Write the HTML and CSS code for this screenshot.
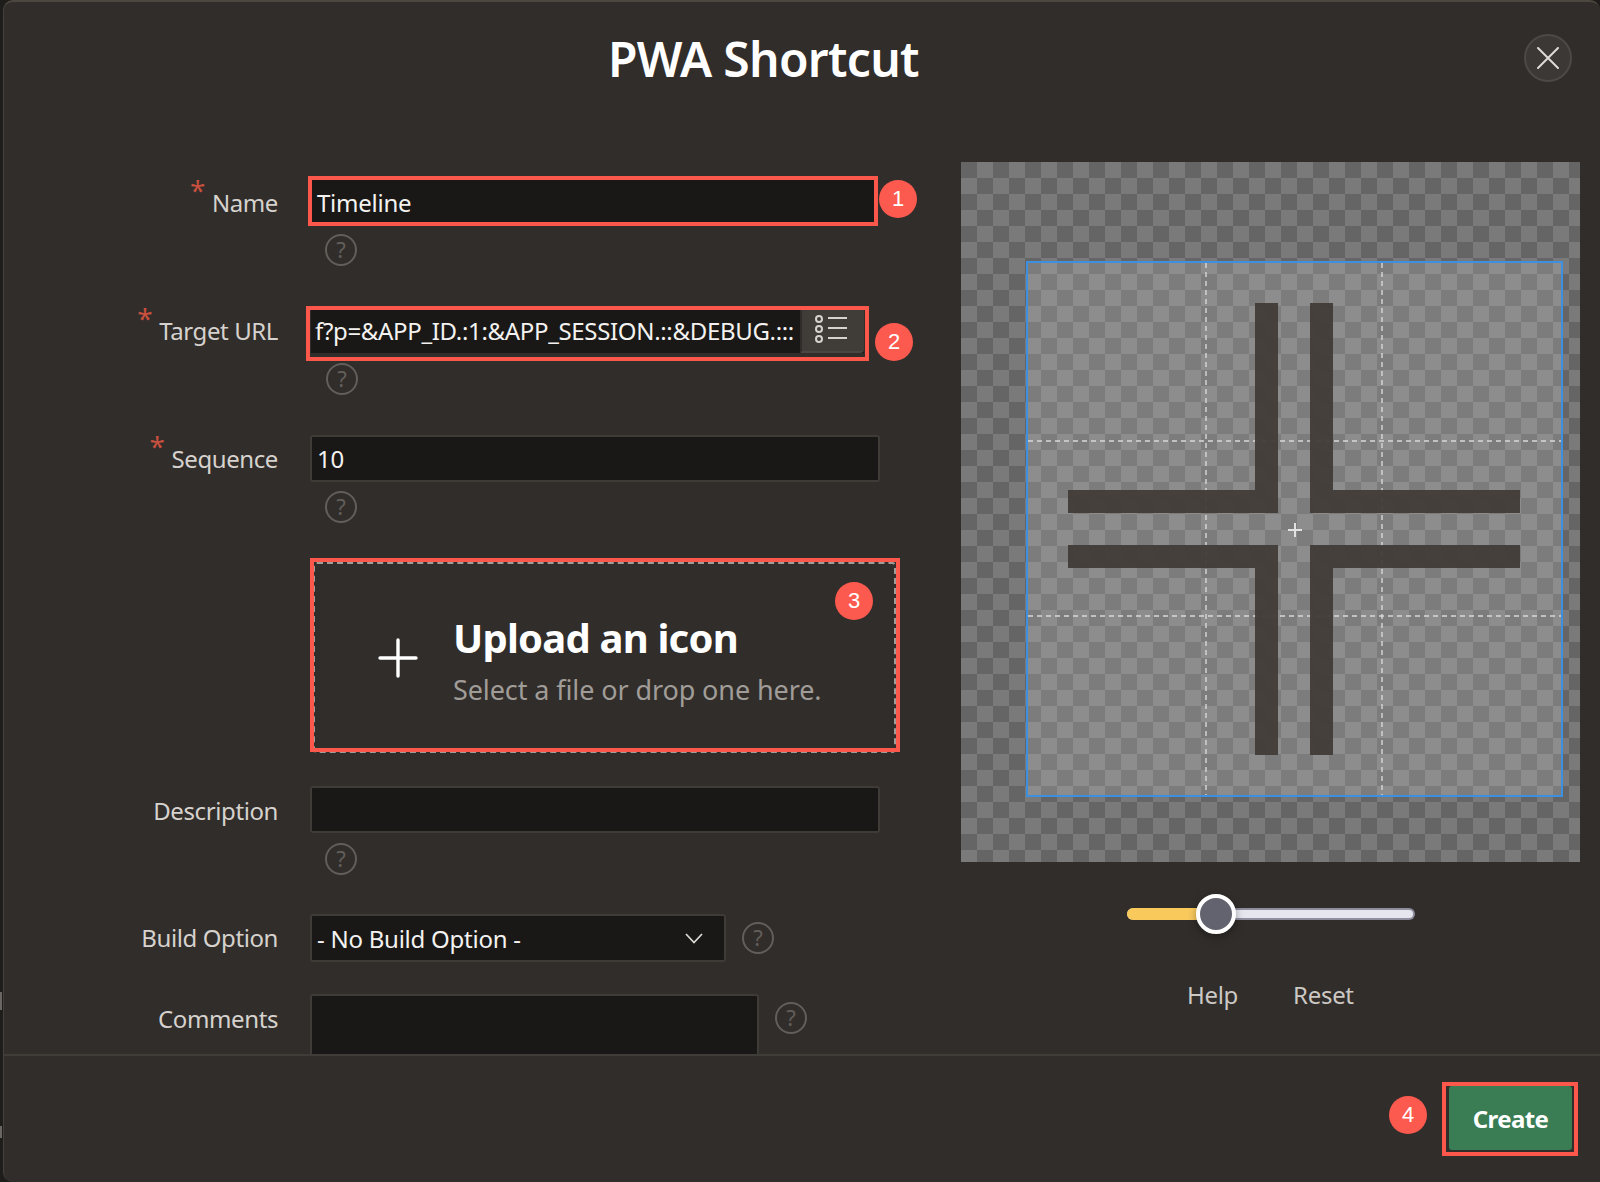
FILE: index.html
```html
<!DOCTYPE html>
<html lang="en">
<head>
<meta charset="utf-8">
<title>PWA Shortcut</title>
<link rel="stylesheet" href="styles.css">
</head>
<body>
<div class="dialog">
  <header class="head">
    <h1 class="title">PWA Shortcut</h1>
    <button class="close" aria-label="Close">
      <svg width="22" height="22" viewBox="0 0 22 22"><path d="M1 1L21 21M21 1L1 21" fill="none" stroke="#dedad6" stroke-width="2" stroke-linecap="round"/></svg>
    </button>
  </header>
  <main class="body">
    <section class="form">
      <div class="row row-name">
        <label class="label req">Name</label>
        <div class="field">
          <div class="input marked"><span class="val">Timeline</span></div>
          <span class="badge badge-1">1</span>
          <svg class="help below" viewBox="0 0 32 32"><circle cx="16" cy="16" r="15"/><text x="16" y="23.500" text-anchor="middle">?</text></svg>
        </div>
      </div>
      <div class="row row-url">
        <label class="label req">Target URL</label>
        <div class="field">
          <div class="input url">
            <span class="val">f?p=&amp;APP_ID.:1:&amp;APP_SESSION.::&amp;DEBUG.:::</span>
            <span class="lov">
              <svg width="32" height="28" viewBox="0 0 32 28"><g fill="none" stroke="#d6d2ce" stroke-width="2"><circle cx="4" cy="4" r="3"/><circle cx="4" cy="14" r="3"/><circle cx="4" cy="24" r="3"/><path d="M13 3H32M13 13H32M13 23H32"/></g></svg>
            </span>
          </div>
          <span class="ring ring-url"></span>
          <span class="badge badge-2">2</span>
          <svg class="help below" viewBox="0 0 32 32"><circle cx="16" cy="16" r="15"/><text x="16" y="23.500" text-anchor="middle">?</text></svg>
        </div>
      </div>
      <div class="row row-seq">
        <label class="label req">Sequence</label>
        <div class="field">
          <div class="input"><span class="val">10</span></div>
          <svg class="help below" viewBox="0 0 32 32"><circle cx="16" cy="16" r="15"/><text x="16" y="23.500" text-anchor="middle">?</text></svg>
        </div>
      </div>
      <div class="upload">
        <svg class="plus" width="40" height="40" viewBox="0 0 40 40"><path d="M2 20H38M20 2V38" fill="none" stroke="#fff" stroke-width="3.400" stroke-linecap="round"/></svg>
        <div class="upload-text">
          <div class="upload-title">Upload an icon</div>
          <div class="upload-sub">Select a file or drop one here.</div>
        </div>
        <span class="ring ring-upload"></span>
        <span class="badge badge-3">3</span>
      </div>
      <div class="row row-desc">
        <label class="label">Description</label>
        <div class="field">
          <div class="input"></div>
          <svg class="help below" viewBox="0 0 32 32"><circle cx="16" cy="16" r="15"/><text x="16" y="23.500" text-anchor="middle">?</text></svg>
        </div>
      </div>
      <div class="row row-build">
        <label class="label">Build Option</label>
        <div class="field inline">
          <div class="input select">
            <span class="val">- No Build Option -</span>
            <svg width="18" height="11" viewBox="0 0 18 11"><path d="M1 1L9 9.500L17 1" fill="none" stroke="#dedad6" stroke-width="1.700"/></svg>
          </div>
          <svg class="help" viewBox="0 0 32 32"><circle cx="16" cy="16" r="15"/><text x="16" y="23.500" text-anchor="middle">?</text></svg>
        </div>
      </div>
      <div class="row row-comments">
        <label class="label">Comments</label>
        <div class="field inline">
          <div class="input textarea"></div>
          <svg class="help" viewBox="0 0 32 32"><circle cx="16" cy="16" r="15"/><text x="16" y="23.500" text-anchor="middle">?</text></svg>
        </div>
      </div>
    </section>
    <aside class="side">
      <div class="canvas">
        <div class="crop">
          <svg class="glyph" width="537" height="536" viewBox="0 0 537 536">
            <g class="guides">
              <path d="M2 180H535M2 355H535M180 2V534M356 2V534"/>
            </g>
            <path class="shape" d="M229 42H252V252H42V229H229ZM284 42H307V229H494V252H284ZM42 284H252V494H229V307H42ZM284 284H494V307H307V494H284Z"/>
            <path class="center" d="M262 269H276M269 262V276"/>
          </svg>
        </div>
      </div>
      <div class="slider">
        <span class="track-on"></span>
        <span class="thumb"></span>
      </div>
      <div class="links">
        <span>Help</span>
        <span>Reset</span>
      </div>
    </aside>
  </main>
  <footer class="foot">
    <span class="badge badge-4">4</span>
    <div class="create-wrap"><button class="create">Create</button></div>
  </footer>
</div>
</body>
</html>
```
FILE: styles.css
```css
* { box-sizing: border-box; }
html, body { margin: 0; height: 1182px; overflow: hidden; }
body {
  font-family: "Noto Sans", "Open Sans", sans-serif;
  color: #d6d2ce;
  background:
    linear-gradient(#6a6762, #6a6762) 0 992px / 2px 18px no-repeat,
    linear-gradient(#6a6762, #6a6762) 0 1126px / 2px 12px no-repeat,
    #1f1d1b;
}

.dialog {
  margin-left: 3px;
  height: 1182px;
  background: #312d2a;
  border-top: 2px solid #4c483f;
  border-left: 1px solid #45413d;
  border-radius: 10px 10px 0 10px;
  display: flex;
  flex-direction: column;
  overflow: hidden;
}

.head { position: relative; height: 160px; flex: none; }
.title {
  margin: 0;
  padding-top: 23px;
  padding-left: 604px;
  font-size: 48px;
  line-height: 68px;
  font-weight: 600;
  letter-spacing: -0.7px;
  color: #fff;
  white-space: nowrap;
}
.close {
  position: absolute;
  left: 1520px;
  top: 32px;
  width: 48px;
  height: 48px;
  padding: 0;
  border: 2px solid #4d4945;
  border-radius: 50%;
  background: #3c3835;
  display: flex;
  align-items: center;
  justify-content: center;
}

.body { display: flex; flex: none; height: 892px; overflow: hidden; }
.form { width: 957px; flex: none; }

.row { display: flex; align-items: flex-start; }
.label {
  position: relative;
  width: 274px;
  flex: none;
  text-align: right;
  font-size: 24px;
  line-height: 34px;
  letter-spacing: -0.4px;
  color: #d6d2ce;
  white-space: nowrap;
}
.req::before {
  content: "*";
  position: relative;
  top: -11px;
  margin-right: 7px;
  color: #c8503f;
  font-size: 28px;
  line-height: 0;
}
.field { position: relative; margin-left: 32px; flex: none; }
.field.inline { display: flex; align-items: flex-start; }

.input {
  width: 570px;
  height: 47px;
  padding: 0 5px;
  display: flex;
  align-items: center;
  background: #191816;
  border: 2px solid #3f3b37;
  border-radius: 3px;
  font-size: 24px;
  letter-spacing: -0.25px;
  color: #fff;
  white-space: nowrap;
}
.val { color: #f4f2f0; }
.marked {
  outline: 4px solid #fb574b;
  outline-offset: -2px;
  border-radius: 0;
  width: 566px;
  height: 46px;
  padding-top: 2px;
}

.help { display: block; width: 32px; height: 32px; }
.help.below { margin-left: 15px; margin-top: 10px; }
.help circle { fill: none; stroke: #625e5a; stroke-width: 2; }
.help text { fill: #625e5a; font-family: "Noto Sans", sans-serif; font-size: 22px; }

.row-name { margin-top: 16px; }
.row-name .label { padding-top: 8px; }
.row-url { margin-top: 44px; }
.row-url .label { padding-top: 4px; }
.row-seq { margin-top: 40px; }
.row-seq .label { padding-top: 7px; }
.row-seq .help.below { margin-top: 9px; }
.row-desc { margin-top: 33px; }
.row-desc .label { padding-top: 8px; }
.row-build { margin-top: 39px; }
.row-build .label { padding-top: 7px; }
.row-comments { margin-top: 32px; }
.row-comments .label { padding-top: 8px; }

.url {
  width: 553px;
  height: 43px;
  padding: 0 0 2px 4px;
  border: 0;
  border-radius: 0;
  letter-spacing: -0.33px;
  justify-content: space-between;
  overflow: hidden;
}
.row-url .field { margin-left: 33px; }
.lov {
  width: 64px;
  height: 43px;
  margin-bottom: -2px;
  flex: none;
  background: #403c38;
  border-left: 2px solid #2f2c29;
  border-bottom: 2px solid #4a4642;
  border-radius: 0 0 4px 0;
  padding: 0 4px 4px 0;
  display: flex;
  align-items: center;
  justify-content: center;
}
.ring { position: absolute; border: 4px solid #fb574b; pointer-events: none; }
.ring-url { left: -5px; top: -4px; width: 563px; height: 55px; }

.badge {
  position: absolute;
  width: 38px;
  height: 38px;
  border-radius: 50%;
  background: #fd5a4f;
  color: #fff;
  font-family: "Liberation Sans", Arial, sans-serif;
  font-size: 22px;
  line-height: 38px;
  text-align: center;
}
.badge-1 { left: 569px; top: 2px; }
.badge-2 { left: 564px; top: 13px; }

.upload {
  position: relative;
  margin-left: 309px;
  margin-top: 39px;
  width: 583px;
  height: 191px;
  display: flex;
  align-items: center;
  border: 2px dashed #a09c98;
  border-radius: 4px;
}
.plus { margin-left: 63px; flex: none; }
.upload-text { margin-left: 35px; padding-top: 4px; }
.upload-title {
  font-size: 40px;
  line-height: 54px;
  font-weight: 700;
  letter-spacing: -0.8px;
  color: #fff;
}
.upload-sub {
  margin-top: 6px;
  font-size: 27px;
  line-height: 38px;
  letter-spacing: -0.1px;
  color: #a09c98;
}
.ring-upload { left: -5px; top: -6px; width: 590px; height: 194px; }
.badge-3 { left: 520px; top: 18px; }

.select { width: 416px; height: 48px; justify-content: space-between; padding-right: 21px; }
.select + .help { margin-left: 16px; margin-top: 8px; }
.textarea { width: 449px; height: 120px; }
.textarea + .help { margin-left: 16px; margin-top: 8px; }

.side { flex: none; width: 619px; }
.canvas {
  position: relative;
  width: 619px;
  height: 700px;
  background-color: #656565;
  background-image:
    conic-gradient(#7a7a7a 25%, #656565 0 50%, #7a7a7a 0 75%, #656565 0);
  background-size: 32px 32px;
}
.crop {
  position: absolute;
  left: 65px;
  top: 99px;
  width: 537px;
  height: 536px;
  background: rgba(255, 255, 255, .15);
  outline: 2px solid #3d8fe0;
  outline-offset: -2px;
}
.glyph { display: block; }
.guides path { fill: none; stroke: #d8d8d8; stroke-width: 1.400; stroke-dasharray: 5 4; }
.shape { fill: #413c38; opacity: .95; }
.center { fill: none; stroke: #e2e2e2; stroke-width: 2; }

.slider {
  position: relative;
  margin-left: 166px;
  margin-top: 46px;
  width: 288px;
  height: 12px;
  border-radius: 6px;
  background: #e6e6ee;
  border: 2px solid #8e8e9e;
  border-left: 0;
}
.track-on {
  display: block;
  width: 90px;
  height: 12px;
  margin-top: -2px;
  border-radius: 6px 0 0 6px;
  background: #f9c95c;
}
.thumb {
  position: absolute;
  left: 69px;
  top: -16px;
  width: 40px;
  height: 40px;
  border-radius: 50%;
  border: 4px solid #fff;
  background: #63636f;
  box-shadow: 0 3px 8px rgba(0, 0, 0, .35);
}
.links {
  display: flex;
  gap: 55px;
  margin-left: 226px;
  margin-top: 58px;
  font-size: 24px;
  line-height: 34px;
  letter-spacing: -0.3px;
  color: #ccc8c4;
}

.foot {
  position: relative;
  flex: 1;
  border-top: 2px solid #403c38;
}
.badge-4 { left: 1385px; top: 40px; }
.create-wrap {
  position: absolute;
  left: 1438px;
  top: 26px;
  width: 136px;
  height: 74px;
  border: 4px solid #fb574b;
  padding: 0 2px 2px 3px;
  display: flex;
}
.create {
  flex: 1;
  border: 0;
  border-radius: 3px;
  background: #3a7d55;
  color: #fff;
  font-family: inherit;
  font-size: 24px;
  font-weight: 700;
  letter-spacing: -0.6px;
  padding: 0;
}
```
